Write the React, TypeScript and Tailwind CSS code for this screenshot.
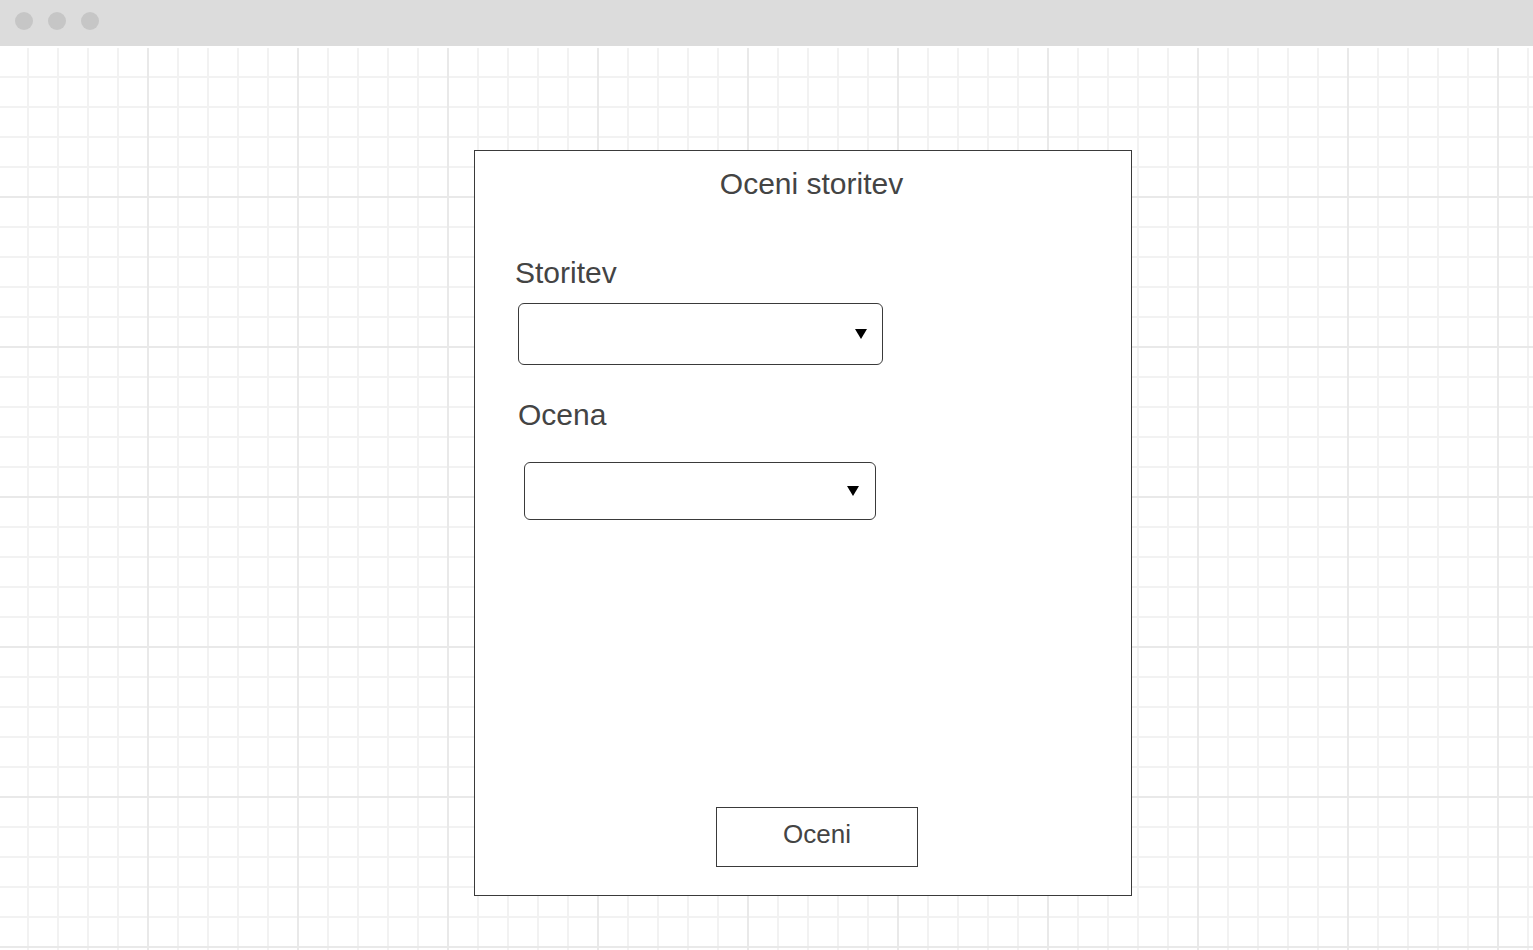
import React from 'react';

function Caret() {
  return (
    <svg width="12" height="10" viewBox="0 0 12 10" className="shrink-0">
      <path d="M0 0 H12 L6 10 Z" fill="#000" />
    </svg>
  );
}

function Select({ className }: { className: string }) {
  return (
    <div className={`flex items-center justify-end border border-[#3a3a3a] rounded-[6px] bg-white ${className}`}>
      <Caret />
    </div>
  );
}

export default function App() {
  return (
    <div className="w-[1533px] h-[950px] overflow-hidden flex flex-col font-['Liberation_Sans',Arial,sans-serif] text-[#444]">
      {/* window chrome */}
      <div className="h-[48px] shrink-0 bg-[#dcdcdc] border-b-2 border-white flex items-center gap-[15px] pl-[15px] pb-[4px]">
        <span className="w-[18px] h-[18px] rounded-full bg-[#c6c6c6]" />
        <span className="w-[18px] h-[18px] rounded-full bg-[#c6c6c6]" />
        <span className="w-[18px] h-[18px] rounded-full bg-[#c6c6c6]" />
      </div>

      {/* grid canvas */}
      <div className="flex-1 bg-white bg-[linear-gradient(to_right,#e9e9e9_2px,transparent_2px),linear-gradient(to_bottom,#e9e9e9_2px,transparent_2px),linear-gradient(to_right,#f2f2f2_2px,transparent_2px),linear-gradient(to_bottom,#f2f2f2_2px,transparent_2px)] bg-[size:150px_150px,150px_150px,30px_30px,30px_30px] bg-[position:147px_0px,0px_-2px,27px_0px,0px_-2px] pt-[102px] pl-[474px]">
        <div className="w-[658px] h-[746px] border border-[#3a3a3a] bg-white flex flex-col">
          <h1 className="mt-[16px] pl-[17px] text-center text-[30px] leading-[34px]">Oceni storitev</h1>

          <label className="mt-[55px] ml-[40px] text-[30px] leading-[34px]">Storitev</label>
          <Select className="mt-[13px] ml-[43px] w-[365px] h-[62px] pr-[15px]" />

          <label className="mt-[33px] ml-[43px] text-[30px] leading-[34px]">Ocena</label>
          <Select className="mt-[30px] ml-[49px] w-[352px] h-[58px] pr-[16px]" />

          <button className="mt-auto mb-[28px] ml-[241px] w-[202px] h-[60px] border border-[#3a3a3a] bg-white text-[26px] leading-[30px] text-[#444] pb-[7px]">
            Oceni
          </button>
        </div>
      </div>
    </div>
  );
}
